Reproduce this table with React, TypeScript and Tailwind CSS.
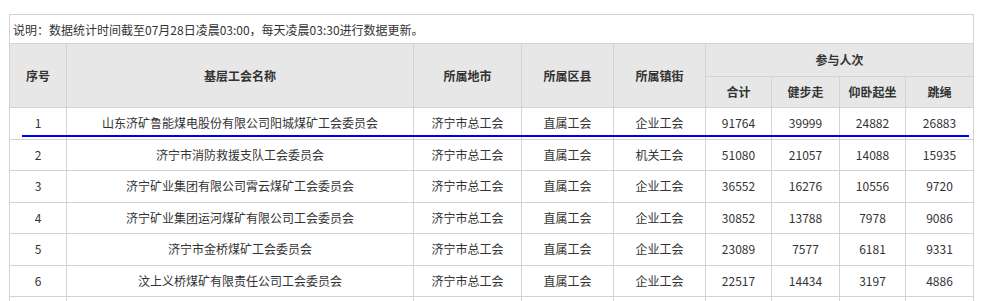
import React from 'react';

interface Row {
  no: string;
  name: string;
  city: string;
  district: string;
  street: string;
  total: string;
  walk: string;
  situp: string;
  rope: string;
}

const rows: Row[] = [
  { no: '1', name: '山东济矿鲁能煤电股份有限公司阳城煤矿工会委员会', city: '济宁市总工会', district: '直属工会', street: '企业工会', total: '91764', walk: '39999', situp: '24882', rope: '26883' },
  { no: '2', name: '济宁市消防救援支队工会委员会', city: '济宁市总工会', district: '直属工会', street: '机关工会', total: '51080', walk: '21057', situp: '14088', rope: '15935' },
  { no: '3', name: '济宁矿业集团有限公司霄云煤矿工会委员会', city: '济宁市总工会', district: '直属工会', street: '企业工会', total: '36552', walk: '16276', situp: '10556', rope: '9720' },
  { no: '4', name: '济宁矿业集团运河煤矿有限公司工会委员会', city: '济宁市总工会', district: '直属工会', street: '企业工会', total: '30852', walk: '13788', situp: '7978', rope: '9086' },
  { no: '5', name: '济宁市金桥煤矿工会委员会', city: '济宁市总工会', district: '直属工会', street: '企业工会', total: '23089', walk: '7577', situp: '6181', rope: '9331' },
  { no: '6', name: '汶上义桥煤矿有限责任公司工会委员会', city: '济宁市总工会', district: '直属工会', street: '企业工会', total: '22517', walk: '14434', situp: '3197', rope: '4886' },
  { no: '', name: '', city: '', district: '', street: '', total: '', walk: '', situp: '', rope: '' },
];

const th = 'border border-[#d2d2d2] bg-[#e7e7e7] font-bold text-[12px] text-[#333] text-center align-middle';
const td = 'border border-[#d2d2d2] text-[12px] text-[#333] text-center align-middle';

export default function App() {
  return (
    <div className="relative w-[990px] h-[301px] overflow-hidden bg-white font-['Noto_Sans_CJK_SC',sans-serif]">
      <table className="ml-[9px] mt-[14px] w-[964px] table-fixed border-collapse">
        <colgroup>
          <col className="w-[57px]" />
          <col className="w-[347px]" />
          <col className="w-[108px]" />
          <col className="w-[92px]" />
          <col className="w-[92px]" />
          <col className="w-[66px]" />
          <col className="w-[68px]" />
          <col className="w-[66px]" />
          <col className="w-[68px]" />
        </colgroup>
        <thead>
          <tr className="h-[29px]">
            <td colSpan={9} className="border border-[#d2d2d2] pl-[3px] pt-[2px] text-left text-[12px] text-[#333] align-middle">
              说明：数据统计时间截至07月28日凌晨03:00，每天凌晨03:30进行数据更新。
            </td>
          </tr>
          <tr className="h-[33px]">
            <th rowSpan={2} className={th}>序号</th>
            <th rowSpan={2} className={th}>基层工会名称</th>
            <th rowSpan={2} className={th}>所属地市</th>
            <th rowSpan={2} className={th}>所属区县</th>
            <th rowSpan={2} className={th}>所属镇街</th>
            <th colSpan={4} className={th}>参与人次</th>
          </tr>
          <tr className="h-[31px]">
            <th className={th}>合计</th>
            <th className={th}>健步走</th>
            <th className={th}>仰卧起坐</th>
            <th className={th}>跳绳</th>
          </tr>
        </thead>
        <tbody>
          {rows.map((r, i) => (
            <tr key={i} className="h-[31.5px]">
              <td className={td}>{r.no}</td>
              <td className={td}>{r.name}</td>
              <td className={td}>{r.city}</td>
              <td className={td}>{r.district}</td>
              <td className={td}>{r.street}</td>
              <td className={td}>{r.total}</td>
              <td className={td}>{r.walk}</td>
              <td className={td}>{r.situp}</td>
              <td className={td}>{r.rope}</td>
            </tr>
          ))}
        </tbody>
      </table>
      {/* hand-drawn annotation underline */}
      <div className="absolute left-[22px] top-[135px] w-[947px] h-[2px] bg-[#0000f0]" />
    </div>
  );
}
